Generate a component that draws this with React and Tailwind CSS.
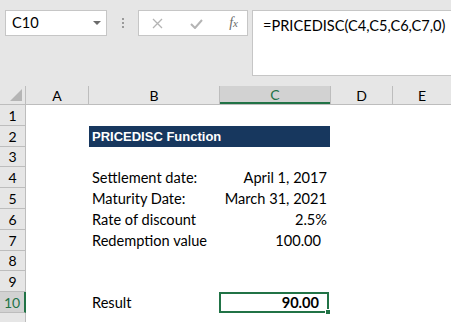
import React from 'react'

const cal = { fontFamily: 'Lato, "Open Sans", sans-serif' }

const rows = [
  { n: 1, h: 'h-[21px]' },
  { n: 2, h: 'h-[21px]', title: true },
  { n: 3, h: 'h-[20px]' },
  { n: 4, h: 'h-[21px]', label: 'Settlement date:', value: 'April 1, 2017' },
  { n: 5, h: 'h-[21px]', label: 'Maturity Date:', value: 'March 31, 2021' },
  { n: 6, h: 'h-[21px]', label: 'Rate of discount', value: '2.5%' },
  { n: 7, h: 'h-[21px]', label: 'Redemption value', value: '100.00', pad: true },
  { n: 8, h: 'h-[20px]' },
  { n: 9, h: 'h-[21px]' },
  { n: 10, h: 'h-[21px]', label: 'Result', result: '90.00' },
  { n: 11, h: 'h-[21px]', hidden: true },
]

function Row({ r }) {
  const active = r.n === 10
  return (
    <div className={`flex ${r.h}`}>
      <div
        className={`w-[26px] shrink-0 flex items-center justify-center border-b border-r text-[14px] ${
          active
            ? 'bg-[#d2d2d2] border-r-[#217346] border-r-2 text-[#217346] border-b-[#bdbdbd]'
            : 'bg-[#e6e6e6] border-[#bdbdbd] text-black'
        }`}
      >
        {r.hidden ? '' : r.n}
      </div>
      <div className="w-[63px] shrink-0" />
      {r.title ? (
        <div className="w-[241px] shrink-0 bg-[#17375e] flex items-center pl-[3px] text-white font-bold text-[13px] [font-family:'Liberation_Sans',Arial,sans-serif]">
          PRICEDISC Function
        </div>
      ) : (
        <>
          <div className="w-[131px] shrink-0 flex items-center pl-[3px] text-[14.6px] text-black">
            {r.label}
          </div>
          {r.result ? (
            <div className="w-[110px] shrink-0 relative flex items-center justify-end pr-[8px] border-2 border-[#217346] font-bold text-[14.6px] text-black -ml-[1px]">
              {r.result}
              <div className="absolute -right-[4px] -bottom-[4px] w-[6px] h-[6px] bg-[#217346] border border-white" />
            </div>
          ) : (
            <div
              className={`w-[110px] shrink-0 flex items-center justify-end text-[14.6px] text-black ${
                r.pad ? 'pr-[9px]' : 'pr-[3px]'
              }`}
            >
              {r.value}
            </div>
          )}
        </>
      )}
      <div className="flex-1" />
    </div>
  )
}

export default function App() {
  return (
    <div className="w-[451px] h-[322px] overflow-hidden bg-white" style={cal}>
      {/* formula bar */}
      <div className="h-[86px] bg-[#e6e6e6] flex items-start pt-[10px] pl-[5px]">
        <div className="w-[102px] h-[26px] bg-white border border-[#c6c6c6] flex items-center justify-between pl-[6px] pr-[5px] text-[14.6px] text-black">
          <span>C10</span>
          <svg width="8" height="5" viewBox="0 0 8 5">
            <path d="M0 0h8L4 4z" fill="#6b6b6b" />
          </svg>
        </div>
        <div className="w-[31px] h-[26px] flex flex-col items-center justify-center gap-[2px]">
          <span className="w-[2px] h-[2px] bg-[#9a9a9a]" />
          <span className="w-[2px] h-[2px] bg-[#9a9a9a]" />
          <span className="w-[2px] h-[2px] bg-[#9a9a9a]" />
        </div>
        <div className="w-[110px] h-[26px] bg-white border border-[#c6c6c6] flex items-center justify-between pl-[13px] pr-[9px]">
          <svg width="11" height="11" viewBox="0 0 11 11">
            <path d="M1 1l9 9M10 1l-9 9" stroke="#b4b4b4" strokeWidth="1.3" />
          </svg>
          <svg width="13" height="11" viewBox="0 0 13 11">
            <path d="M1 6l4 4 7-8" stroke="#b4b4b4" strokeWidth="2" fill="none" />
          </svg>
          <span className="text-[14px] italic text-[#6a6a6a] [font-family:'Liberation_Serif',serif] leading-none">
            f<span className="text-[11px]">x</span>
          </span>
        </div>
        <div className="flex-1 ml-[4px] h-[66px] bg-white border border-[#c6c6c6] border-r-0 pl-[10px] pt-[4px] text-[14.6px] text-black">
          =PRICEDISC(C4,C5,C6,C7,0)
        </div>
      </div>

      {/* column headers */}
      <div className="flex h-[19px] bg-[#e6e6e6] border-b border-[#bdbdbd] text-[14px] text-black">
        <div className="w-[26px] shrink-0 relative border-r border-[#bdbdbd]">
          <svg className="absolute right-[3px] bottom-[3px]" width="12" height="12" viewBox="0 0 12 12">
            <path d="M12 0V12H0z" fill="#b5b5b5" />
          </svg>
        </div>
        <div className="w-[63px] shrink-0 flex items-center justify-center border-r border-[#bdbdbd]">A</div>
        <div className="w-[131px] shrink-0 flex items-center justify-center border-r border-[#bdbdbd]">B</div>
        <div className="w-[110px] shrink-0 flex items-center justify-center bg-[#d2d2d2] border-b-2 border-[#217346] text-[#217346]">C</div>
        <div className="w-[63px] shrink-0 flex items-center justify-center border-r border-l border-[#bdbdbd]">D</div>
        <div className="flex-1 flex items-center justify-center">E</div>
      </div>

      {rows.map((r) => (
        <Row key={r.n} r={r} />
      ))}
    </div>
  )
}
